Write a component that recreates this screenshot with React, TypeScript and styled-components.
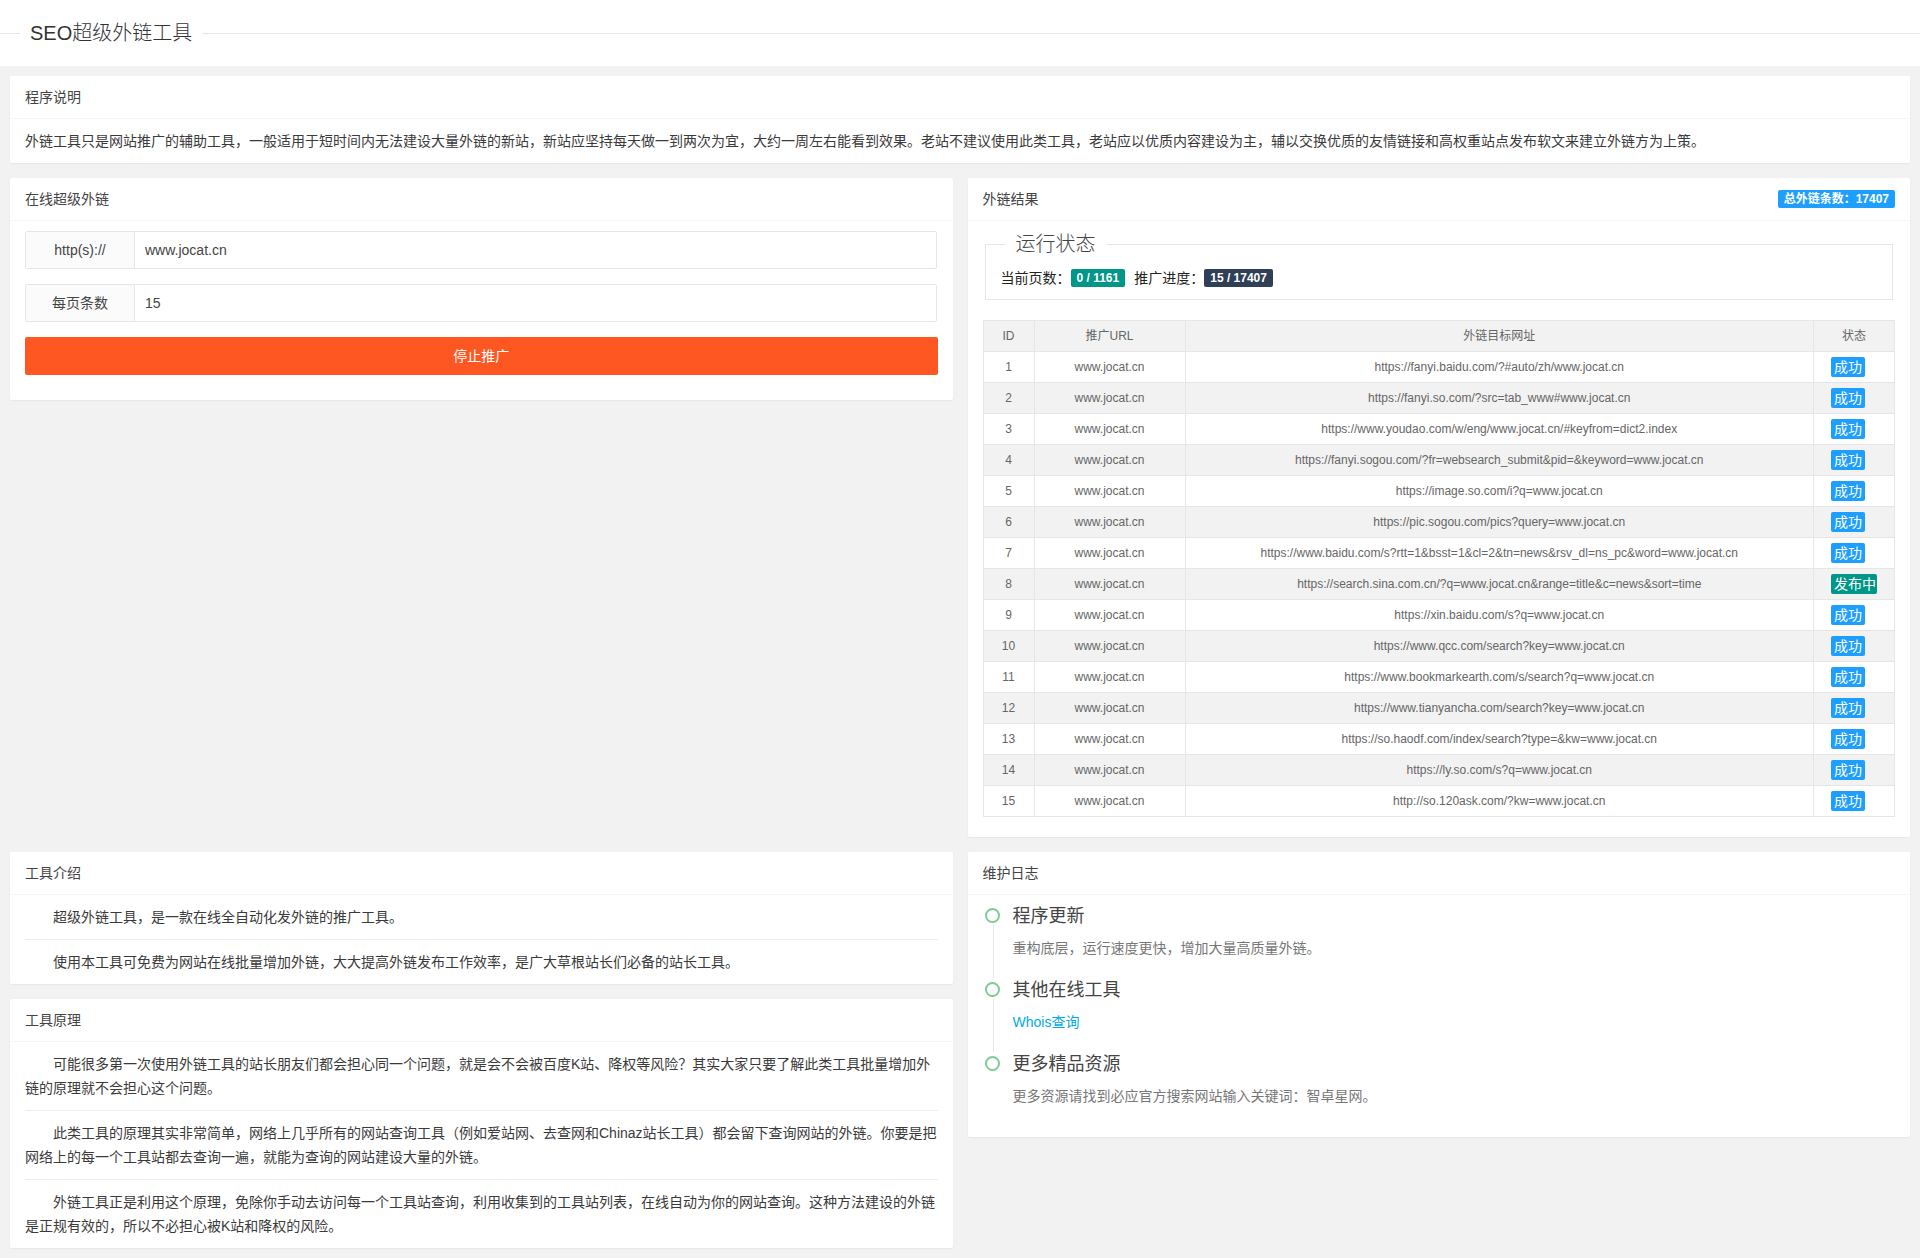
import React from 'react'
import styled, { createGlobalStyle } from 'styled-components'

const FONT = `"Liberation Sans", "Noto Sans CJK SC", sans-serif`

const GlobalStyle = createGlobalStyle`
  * {
    box-sizing: border-box;
  }
  body {
    margin: 0;
    background: #f2f2f2;
    color: #666;
    font: 14px/24px ${FONT};
  }
`

const Header = styled.header`
  background: #fff;
  height: 66px;
  padding-top: 20px;
`

const TitleField = styled.fieldset`
  margin: 0;
  padding: 0;
  border: 0;
  border-top: 1px solid #e6e6e6;
  min-width: 0;

  legend {
    margin-left: 20px;
    padding: 0 10px;
    font-size: 20px;
    font-weight: 300;
    line-height: 26px;
    color: #333;
  }
`

const Page = styled.main`
  padding: 10px;
  display: flex;
  flex-direction: column;
  gap: 15px;
`

const Columns = styled.div`
  display: grid;
  grid-template-columns: 942.5px 942.5px;
  gap: 15px;
  align-items: start;
`

const Stack = styled.div`
  display: flex;
  flex-direction: column;
  gap: 15px;
`

const Card = styled.section`
  background: #fff;
  border-radius: 2px;
  box-shadow: 0 1px 2px 0 rgba(0, 0, 0, 0.05);
`

const CardHead = styled.div`
  height: 43px;
  line-height: 42px;
  padding: 0 15px;
  border-bottom: 1px solid #f6f6f6;
  color: #444;
  display: flex;
  justify-content: space-between;
  align-items: center;
`

const CardBody = styled.div`
  padding: 10px 15px;
  color: #3a3a3a;
`

const InputRow = styled.div`
  display: flex;
  height: 38px;
  margin: 0 1px 15px 0;
  border: 1px solid #e6e6e6;
  border-radius: 2px;
`

const InputLabel = styled.label`
  width: 109px;
  flex: none;
  background: #fbfbfb;
  border-right: 1px solid #e6e6e6;
  text-align: center;
  line-height: 36px;
  color: #444;
`

const InputValue = styled.div`
  flex: 1;
  padding-left: 10px;
  line-height: 36px;
  color: #444;
`

const StopButton = styled.button`
  display: block;
  width: 100%;
  height: 38px;
  margin-bottom: 15px;
  padding: 0;
  border: 0;
  border-radius: 2px;
  background: #ff5722;
  color: #fff;
  font: 14px/36px ${FONT};
`

const Badge = styled.span<{ $bg: string }>`
  display: inline-block;
  height: 18px;
  line-height: 18px;
  padding: 0 6px;
  border-radius: 2px;
  background: ${props => props.$bg};
  color: #fff;
  font-size: 12px;
  font-weight: 700;
`

const StatusField = styled.fieldset`
  margin: 0 2px 20px;
  padding: 9px 15px 9px;
  border: 1px solid #e6e6e6;
  min-width: 0;

  legend {
    margin-left: 5px;
    padding: 0 10px;
    font-size: 20px;
    font-weight: 300;
    line-height: 26px;
    color: #444;
  }
`

const StatusLine = styled.div`
  display: flex;
  align-items: center;
  color: #222;
`

const StatusLabel = styled.span`
  margin-left: 9px;

  &:first-child {
    margin-left: 0;
  }
`

const ResultTable = styled.table`
  width: 100%;
  border-collapse: collapse;
  table-layout: fixed;
  margin-bottom: 10px;
  font-size: 12px;
  color: #666;

  th,
  td {
    border: 1px solid #e6e6e6;
    padding: 5px 0;
    line-height: 20px;
    text-align: center;
    font-weight: 400;
  }
  thead tr {
    background: #f2f2f2;
  }
  tbody tr:nth-child(even) {
    background: #f2f2f2;
  }
`

const StatusCell = styled.td`
  && {
    text-align: left;
    padding-left: 17px;
    font-size: 0;
  }
`

const StatusTag = styled.span<{ $bg: string }>`
  display: inline-block;
  min-width: 34px;
  height: 20px;
  line-height: 20px;
  padding: 0 1px 0 3px;
  vertical-align: top;
  border-radius: 2px;
  background: ${props => props.$bg};
  color: #fff;
  font-size: 14px;
`

const Paragraph = styled.p`
  margin: 0;
  text-indent: 2em;
`

const Rule = styled.hr`
  height: 0;
  margin: 10px 0;
  border: 0;
  border-bottom: 1px solid #eee;
`

const Timeline = styled.ul`
  margin: 0;
  padding: 0;
  list-style: none;
`

const TimelineItem = styled.li`
  position: relative;
  height: 74px;
  padding-left: 30px;

  &:not(:last-child)::before {
    content: '';
    position: absolute;
    left: 10px;
    top: 20px;
    bottom: 1px;
    border-left: 1px solid #e6e6e6;
  }
`

const Ring = styled.span`
  position: absolute;
  left: 2px;
  top: 3px;
  width: 15px;
  height: 15px;
  border: 2px solid #7fcb94;
  border-radius: 50%;
`

const TimelineTitle = styled.h3`
  margin: 0 0 9px;
  font-size: 18px;
  font-weight: 400;
  line-height: 22px;
  color: #444;
`

const TimelineText = styled.div`
  color: #777;
`

const WhoisLink = styled.a`
  color: #01aaed;
  text-decoration: none;
`

const rows: [string, boolean?][] = [
  ['https://fanyi.baidu.com/?#auto/zh/www.jocat.cn'],
  ['https://fanyi.so.com/?src=tab_www#www.jocat.cn'],
  ['https://www.youdao.com/w/eng/www.jocat.cn/#keyfrom=dict2.index'],
  ['https://fanyi.sogou.com/?fr=websearch_submit&pid=&keyword=www.jocat.cn'],
  ['https://image.so.com/i?q=www.jocat.cn'],
  ['https://pic.sogou.com/pics?query=www.jocat.cn'],
  ['https://www.baidu.com/s?rtt=1&bsst=1&cl=2&tn=news&rsv_dl=ns_pc&word=www.jocat.cn'],
  ['https://search.sina.com.cn/?q=www.jocat.cn&range=title&c=news&sort=time', true],
  ['https://xin.baidu.com/s?q=www.jocat.cn'],
  ['https://www.qcc.com/search?key=www.jocat.cn'],
  ['https://www.bookmarkearth.com/s/search?q=www.jocat.cn'],
  ['https://www.tianyancha.com/search?key=www.jocat.cn'],
  ['https://so.haodf.com/index/search?type=&kw=www.jocat.cn'],
  ['https://ly.so.com/s?q=www.jocat.cn'],
  ['http://so.120ask.com/?kw=www.jocat.cn'],
]

function App() {
  return (
    <>
      <GlobalStyle />
      <Header>
        <TitleField>
          <legend>SEO超级外链工具</legend>
        </TitleField>
      </Header>
      <Page>
        <Card>
          <CardHead>程序说明</CardHead>
          <CardBody>
            外链工具只是网站推广的辅助工具，一般适用于短时间内无法建设大量外链的新站，新站应坚持每天做一到两次为宜，大约一周左右能看到效果。老站不建议使用此类工具，老站应以优质内容建设为主，辅以交换优质的友情链接和高权重站点发布软文来建立外链方为上策。
          </CardBody>
        </Card>
        <Columns>
          <Card>
            <CardHead>在线超级外链</CardHead>
            <CardBody>
              <InputRow>
                <InputLabel>http(s)://</InputLabel>
                <InputValue>www.jocat.cn</InputValue>
              </InputRow>
              <InputRow>
                <InputLabel>每页条数</InputLabel>
                <InputValue>15</InputValue>
              </InputRow>
              <StopButton>停止推广</StopButton>
            </CardBody>
          </Card>
          <Card>
            <CardHead>
              外链结果
              <Badge $bg="#1e9fff">总外链条数：17407</Badge>
            </CardHead>
            <CardBody>
              <StatusField>
                <legend>运行状态</legend>
                <StatusLine>
                  <StatusLabel>当前页数：</StatusLabel>
                  <Badge $bg="#009688">0 / 1161</Badge>
                  <StatusLabel>推广进度：</StatusLabel>
                  <Badge $bg="#2f4056">15 / 17407</Badge>
                </StatusLine>
              </StatusField>
              <ResultTable>
                <colgroup>
                  <col style={{ width: 51 }} />
                  <col style={{ width: 151 }} />
                  <col />
                  <col style={{ width: 81 }} />
                </colgroup>
                <thead>
                  <tr>
                    <th>ID</th>
                    <th>推广URL</th>
                    <th>外链目标网址</th>
                    <th>状态</th>
                  </tr>
                </thead>
                <tbody>
                  {rows.map(([url, pending], index) => (
                    <tr key={url}>
                      <td>{index + 1}</td>
                      <td>www.jocat.cn</td>
                      <td>{url}</td>
                      <StatusCell>
                        {pending ? (
                          <StatusTag $bg="#009688">发布中</StatusTag>
                        ) : (
                          <StatusTag $bg="#1e9fff">成功</StatusTag>
                        )}
                      </StatusCell>
                    </tr>
                  ))}
                </tbody>
              </ResultTable>
            </CardBody>
          </Card>
        </Columns>
        <Columns>
          <Stack>
            <Card>
              <CardHead>工具介绍</CardHead>
              <CardBody>
                <Paragraph>超级外链工具，是一款在线全自动化发外链的推广工具。</Paragraph>
                <Rule />
                <Paragraph>使用本工具可免费为网站在线批量增加外链，大大提高外链发布工作效率，是广大草根站长们必备的站长工具。</Paragraph>
              </CardBody>
            </Card>
            <Card>
              <CardHead>工具原理</CardHead>
              <CardBody>
                <Paragraph>可能很多第一次使用外链工具的站长朋友们都会担心同一个问题，就是会不会被百度K站、降权等风险？其实大家只要了解此类工具批量增加外链的原理就不会担心这个问题。</Paragraph>
                <Rule />
                <Paragraph>此类工具的原理其实非常简单，网络上几乎所有的网站查询工具（例如爱站网、去查网和Chinaz站长工具）都会留下查询网站的外链。你要是把网络上的每一个工具站都去查询一遍，就能为查询的网站建设大量的外链。</Paragraph>
                <Rule />
                <Paragraph>外链工具正是利用这个原理，免除你手动去访问每一个工具站查询，利用收集到的工具站列表，在线自动为你的网站查询。这种方法建设的外链是正规有效的，所以不必担心被K站和降权的风险。</Paragraph>
              </CardBody>
            </Card>
          </Stack>
          <Card>
            <CardHead>维护日志</CardHead>
            <CardBody>
              <Timeline>
                <TimelineItem>
                  <Ring />
                  <TimelineTitle>程序更新</TimelineTitle>
                  <TimelineText>重构底层，运行速度更快，增加大量高质量外链。</TimelineText>
                </TimelineItem>
                <TimelineItem>
                  <Ring />
                  <TimelineTitle>其他在线工具</TimelineTitle>
                  <TimelineText>
                    <WhoisLink href="#">Whois查询</WhoisLink>
                  </TimelineText>
                </TimelineItem>
                <TimelineItem>
                  <Ring />
                  <TimelineTitle>更多精品资源</TimelineTitle>
                  <TimelineText>更多资源请找到必应官方搜索网站输入关键词：智卓星网。</TimelineText>
                </TimelineItem>
              </Timeline>
            </CardBody>
          </Card>
        </Columns>
      </Page>
    </>
  )
}

export default App
